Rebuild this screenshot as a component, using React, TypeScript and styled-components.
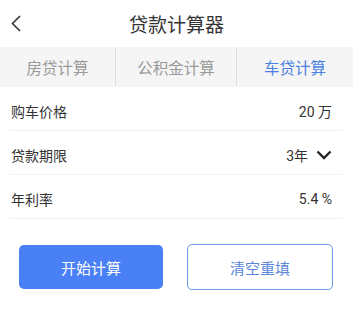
import React from "react";
import styled, { createGlobalStyle } from "styled-components";

const Global = createGlobalStyle`
  html, body { margin: 0; padding: 0; background: #fff; }
  body { font-family: "Noto Sans CJK SC", "Noto Sans", sans-serif; }
`;

const Page = styled.div`
  width: 353px;
  height: 332px;
  background: #fff;
  display: flex;
  flex-direction: column;
`;

const Header = styled.div`
  height: 47px;
  position: relative;
  display: flex;
  align-items: center;
  justify-content: center;
`;

const Back = styled.button`
  position: absolute;
  left: 8px;
  top: 12px;
  width: 16px;
  height: 22px;
  padding: 0;
  border: none;
  background: none;
  display: flex;
  align-items: center;
  justify-content: center;
`;

const Title = styled.h1`
  margin: 0;
  font-size: 19px;
  font-weight: 400;
  color: #333;
  line-height: 1;
  margin-top: -1px;
`;

const Tabs = styled.div`
  height: 40px;
  background: #f5f5f5;
  display: grid;
  grid-template-columns: 115px 1fr 117px;
  align-items: stretch;
`;

const Tab = styled.div<{ $active?: boolean; $divider?: boolean }>`
  display: flex;
  align-items: center;
  justify-content: center;
  font-size: 15.5px;
  color: ${(p) => (p.$active ? "#4a7fe3" : "#999")};
  border-left: ${(p) => (p.$divider ? "1px solid #dcdcdc" : "none")};
  margin: 1px 0;
`;

const List = styled.div`
  padding: 0 11px 0 10px;
`;

const Row = styled.div`
  height: 43px;
  box-sizing: border-box;
  border-bottom: 1px solid #f0f0f0;
  display: flex;
  align-items: center;
  justify-content: space-between;
  padding: 5px 10px 0 1px;
  height: 44px;
`;

const Label = styled.span`
  font-size: 14px;
  color: #333;
`;

const Value = styled.span`
  font-size: 14px;
  color: #333;
  display: flex;
  align-items: center;
  gap: 8px;
  font-family: "Roboto", "Noto Sans CJK SC", sans-serif;
`;

const Buttons = styled.div`
  display: grid;
  grid-template-columns: 144px 146px;
  justify-content: space-between;
  align-items: center;
  padding: 0 20px 0 19px;
  margin-top: 25px;
`;

const Button = styled.button<{ $primary?: boolean }>`
  font-family: "Noto Sans CJK SC", sans-serif;
  font-size: 15px;
  height: ${(p) => (p.$primary ? "44px" : "46px")};
  border-radius: 5px;
  border: ${(p) => (p.$primary ? "none" : "1.5px solid #6f9ae6")};
  background: ${(p) => (p.$primary ? "#4a80f5" : "#fff")};
  color: ${(p) => (p.$primary ? "#fff" : "#5b88d8")};
  padding: 0;
`;

export default function App() {
  return (
    <Page>
      <Global />
      <Header>
        <Back aria-label="返回">
          <svg width="10" height="17" viewBox="0 0 10 17">
            <path d="M9 1 L1.5 8.5 L9 16" fill="none" stroke="#333" strokeWidth="1.6" />
          </svg>
        </Back>
        <Title>贷款计算器</Title>
      </Header>
      <Tabs>
        <Tab>房贷计算</Tab>
        <Tab $divider>公积金计算</Tab>
        <Tab $divider $active>车贷计算</Tab>
      </Tabs>
      <List>
        <Row>
          <Label>购车价格</Label>
          <Value>20 万</Value>
        </Row>
        <Row>
          <Label>贷款期限</Label>
          <Value>
            3年
            <svg width="16" height="10" viewBox="0 0 16 10">
              <path d="M1.5 1.5 L8 8 L14.5 1.5" fill="none" stroke="#222" strokeWidth="2.4" />
            </svg>
          </Value>
        </Row>
        <Row>
          <Label>年利率</Label>
          <Value>5.4 %</Value>
        </Row>
      </List>
      <Buttons>
        <Button $primary>开始计算</Button>
        <Button>清空重填</Button>
      </Buttons>
    </Page>
  );
}
